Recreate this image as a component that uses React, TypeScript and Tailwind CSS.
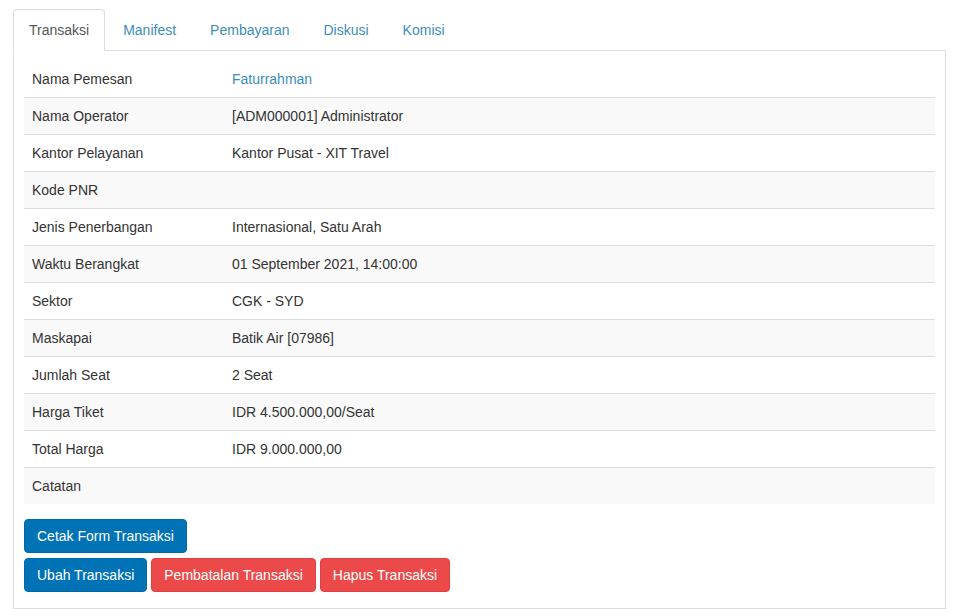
import clsx from 'clsx'

const TABS = ['Transaksi', 'Manifest', 'Pembayaran', 'Diskusi', 'Komisi']

const ROWS: { label: string; value: string; link?: boolean }[] = [
  { label: 'Nama Pemesan', value: 'Faturrahman', link: true },
  { label: 'Nama Operator', value: '[ADM000001] Administrator' },
  { label: 'Kantor Pelayanan', value: 'Kantor Pusat - XIT Travel' },
  { label: 'Kode PNR', value: '' },
  { label: 'Jenis Penerbangan', value: 'Internasional, Satu Arah' },
  { label: 'Waktu Berangkat', value: '01 September 2021, 14:00:00' },
  { label: 'Sektor', value: 'CGK - SYD' },
  { label: 'Maskapai', value: 'Batik Air [07986]' },
  { label: 'Jumlah Seat', value: '2 Seat' },
  { label: 'Harga Tiket', value: 'IDR 4.500.000,00/Seat' },
  { label: 'Total Harga', value: 'IDR 9.000.000,00' },
  { label: 'Catatan', value: '' },
]

export default function App() {
  return (
    <div className="min-h-[616px] bg-white pt-[9px] pl-[13px] pr-[12px] font-['Liberation_Sans',Arial,sans-serif] text-[14px] leading-[20px] text-[#333]">
      {/* Tabs */}
      <div className="flex h-[42px]">
        {TABS.map((t, i) => (
          <div
            key={t}
            className={clsx(
              'mr-[2px] rounded-t-[4px] border px-[15px] py-[10px]',
              i === 0
                ? 'relative z-10 border-[#ddd] border-b-white bg-white text-[#555]'
                : 'border-transparent text-[#3c8dbc]',
            )}
          >
            {t}
          </div>
        ))}
      </div>

      {/* Panel */}
      <div className="-mt-px border border-[#ddd] px-[10px] pt-[10px] pb-[16px]">
        <table className="w-full border-collapse">
          <tbody>
            {ROWS.map((r, i) => (
              <tr key={r.label} className={clsx(i % 2 === 1 && 'bg-[#f9f9f9]')}>
                <td
                  className={clsx(
                    'w-[200px] px-[8px] align-middle',
                    i === 0 ? 'h-[36px]' : 'h-[37px] border-t border-[#ddd]',
                  )}
                >
                  {r.label}
                </td>
                <td className={clsx('px-[8px] align-middle', i > 0 && 'border-t border-[#ddd]', r.link && 'text-[#3c8dbc]')}>
                  {r.value}
                </td>
              </tr>
            ))}
          </tbody>
        </table>

        <div className="mt-[15px] flex flex-col gap-[5px]">
          <div className="flex">
            <button className="rounded-[4px] border border-[#006aa9] bg-[#0073b7] px-[12px] py-[6px] text-white">
              Cetak Form Transaksi
            </button>
          </div>
          <div className="flex gap-[4px]">
            <button className="rounded-[4px] border border-[#006aa9] bg-[#0073b7] px-[12px] py-[6px] text-white">
              Ubah Transaksi
            </button>
            <button className="rounded-[4px] border border-[#e03f3f] bg-[#ec4a4a] px-[12px] py-[6px] text-white">
              Pembatalan Transaksi
            </button>
            <button className="rounded-[4px] border border-[#e03f3f] bg-[#ec4a4a] px-[12px] py-[6px] text-white">
              Hapus Transaksi
            </button>
          </div>
        </div>
      </div>
    </div>
  )
}
